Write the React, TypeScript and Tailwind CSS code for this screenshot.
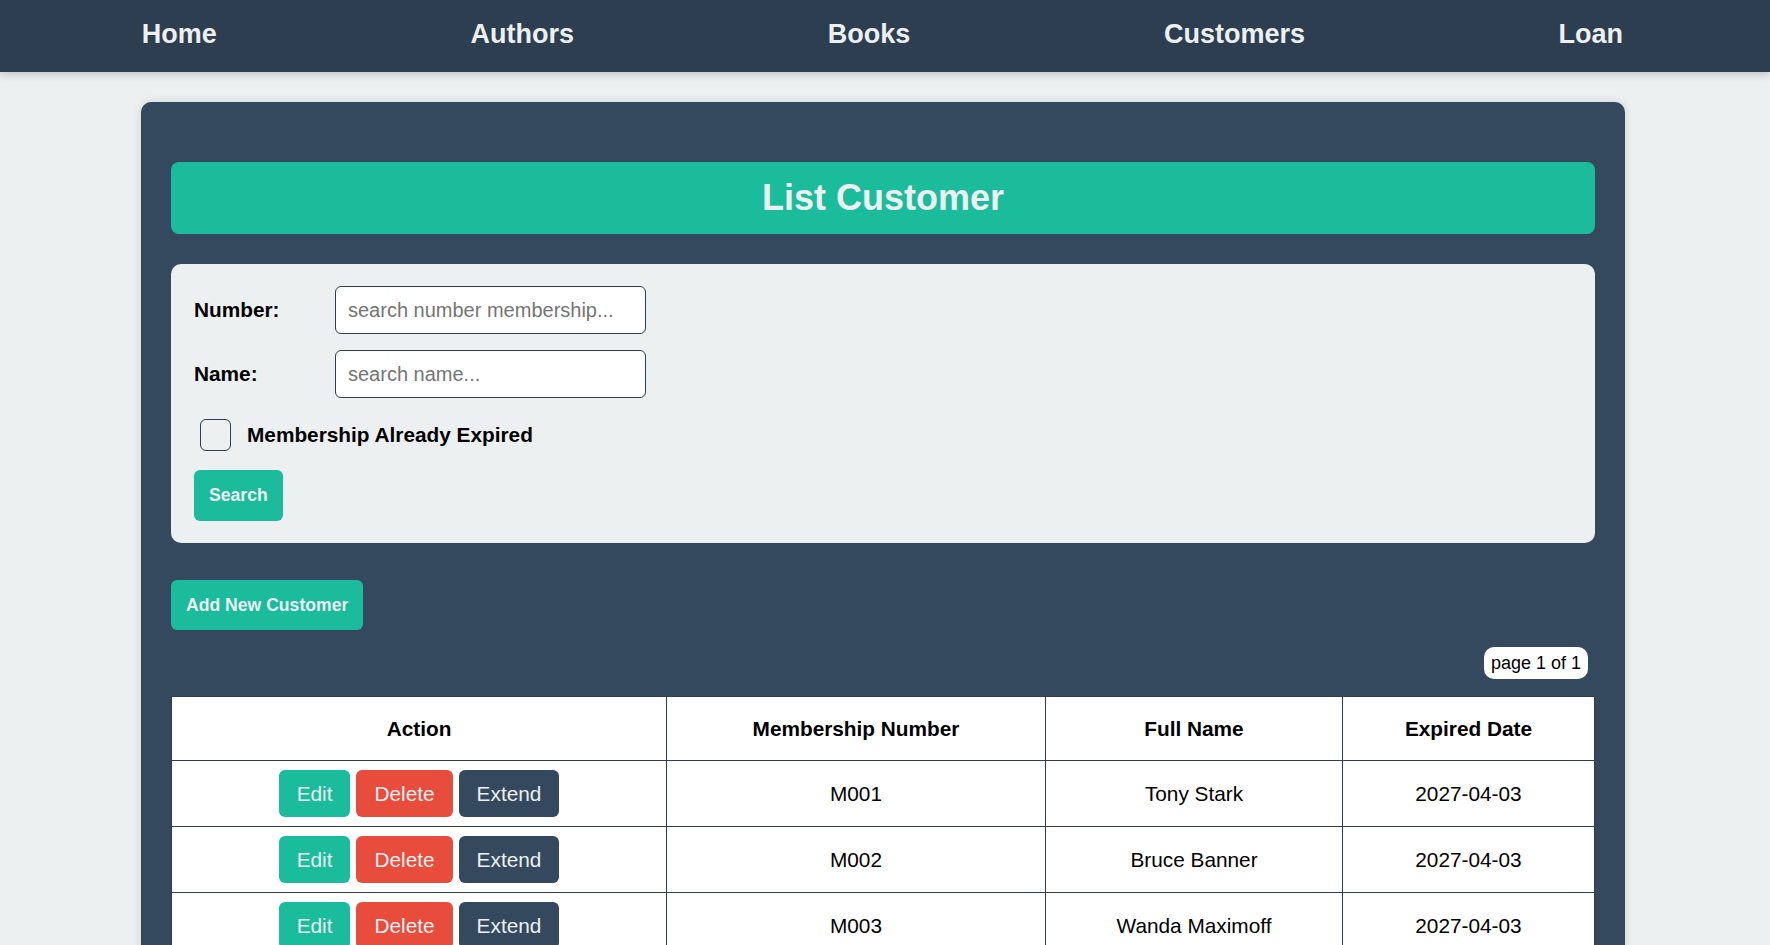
import React from 'react';

const navLinks = ['Home', 'Authors', 'Books', 'Customers', 'Loan'];

const customers = [
    { id: 'M001', name: 'Tony Stark', expired: '2027-04-03' },
    { id: 'M002', name: 'Bruce Banner', expired: '2027-04-03' },
    { id: 'M003', name: 'Wanda Maximoff', expired: '2027-04-03' },
];

export default function App() {
    return (
        <div className="min-h-screen bg-[#ecf0f1] font-['Liberation_Sans',Arial,sans-serif] pb-10">
            <nav className="h-[72px] bg-[#2c3e50] shadow-[0_3px_8px_rgba(0,0,0,0.18)] flex items-center justify-around pl-[15px] pr-[20px] pb-[4px]">
                {navLinks.map(link => (
                    <a key={link} href="#" className="text-[27px] font-bold text-[#ecf0f1] leading-none">
                        {link}
                    </a>
                ))}
            </nav>

            <main className="w-[1484px] ml-[141px] mt-[30px] bg-[#34495e] rounded-[10px] px-[30px] pt-[60px] pb-[30px] shadow-[0_0_10px_rgba(0,0,0,0.12)]">
                <h1 className="h-[72px] bg-[#1abc9c] rounded-lg flex items-center justify-center text-[36px] font-bold text-[#ecf0f1]">
                    List Customer
                </h1>

                <div className="mt-[30px] bg-[#ecf0f1] rounded-[10px] px-[23px] py-[22px]">
                    <div className="flex items-center">
                        <label className="w-[141px] text-[20.8px] font-bold text-black">Number:</label>
                        <input
                            placeholder="search number membership..."
                            className="w-[311px] h-[48px] px-3 bg-white border border-[#2c3e50] rounded-md text-[20px] text-black placeholder:text-[#757575] outline-none"
                        />
                    </div>
                    <div className="flex items-center mt-4">
                        <label className="w-[141px] text-[20.8px] font-bold text-black">Name:</label>
                        <input
                            placeholder="search name..."
                            className="w-[311px] h-[48px] px-3 bg-white border border-[#2c3e50] rounded-md text-[20px] text-black placeholder:text-[#757575] outline-none"
                        />
                    </div>
                    <label className="flex items-center gap-4 mt-[21px] ml-[6px]">
                        <input
                            type="checkbox"
                            className="appearance-none w-[31px] h-[32px] border border-[#2c3e50] rounded-md bg-transparent"
                        />
                        <span className="text-[20.8px] font-bold text-black">Membership Already Expired</span>
                    </label>
                    <button className="mt-[19px] h-[51px] px-[15px] bg-[#1abc9c] rounded-md text-[17.6px] font-bold text-[#ecf0f1]">
                        Search
                    </button>
                </div>

                <button className="mt-[37px] h-[50px] px-[15px] bg-[#1abc9c] rounded-md text-[17.6px] font-bold text-[#ecf0f1]">
                    Add New Customer
                </button>

                <div className="flex justify-end mt-[17px] pr-[7px]">
                    <span className="h-[32px] px-[7px] flex items-center bg-white rounded-[10px] text-[18px] text-black">
                        page 1 of 1
                    </span>
                </div>

                <table className="mt-[17px] w-full bg-white border-collapse text-black text-[20.8px]">
                    <thead>
                        <tr className="h-[64px]">
                            <th className="w-[495px] border border-[#2c3e50] font-bold">Action</th>
                            <th className="w-[379px] border border-[#2c3e50] font-bold">Membership Number</th>
                            <th className="w-[297px] border border-[#2c3e50] font-bold">Full Name</th>
                            <th className="border border-[#2c3e50] font-bold">Expired Date</th>
                        </tr>
                    </thead>
                    <tbody>
                        {customers.map(c => (
                            <tr key={c.id} className="h-[66px]">
                                <td className="border border-[#2c3e50] text-center">
                                    <div className="flex justify-center gap-[6px]">
                                        <button className="h-[47px] px-[18px] bg-[#1abc9c] rounded-md text-[#ecf0f1]">Edit</button>
                                        <button className="h-[47px] px-[18px] bg-[#e74c3c] rounded-md text-[#ecf0f1]">Delete</button>
                                        <button className="h-[47px] px-[18px] bg-[#34495e] rounded-md text-[#ecf0f1]">Extend</button>
                                    </div>
                                </td>
                                <td className="border border-[#2c3e50] text-center">{c.id}</td>
                                <td className="border border-[#2c3e50] text-center">{c.name}</td>
                                <td className="border border-[#2c3e50] text-center">{c.expired}</td>
                            </tr>
                        ))}
                    </tbody>
                </table>
            </main>
        </div>
    );
}
